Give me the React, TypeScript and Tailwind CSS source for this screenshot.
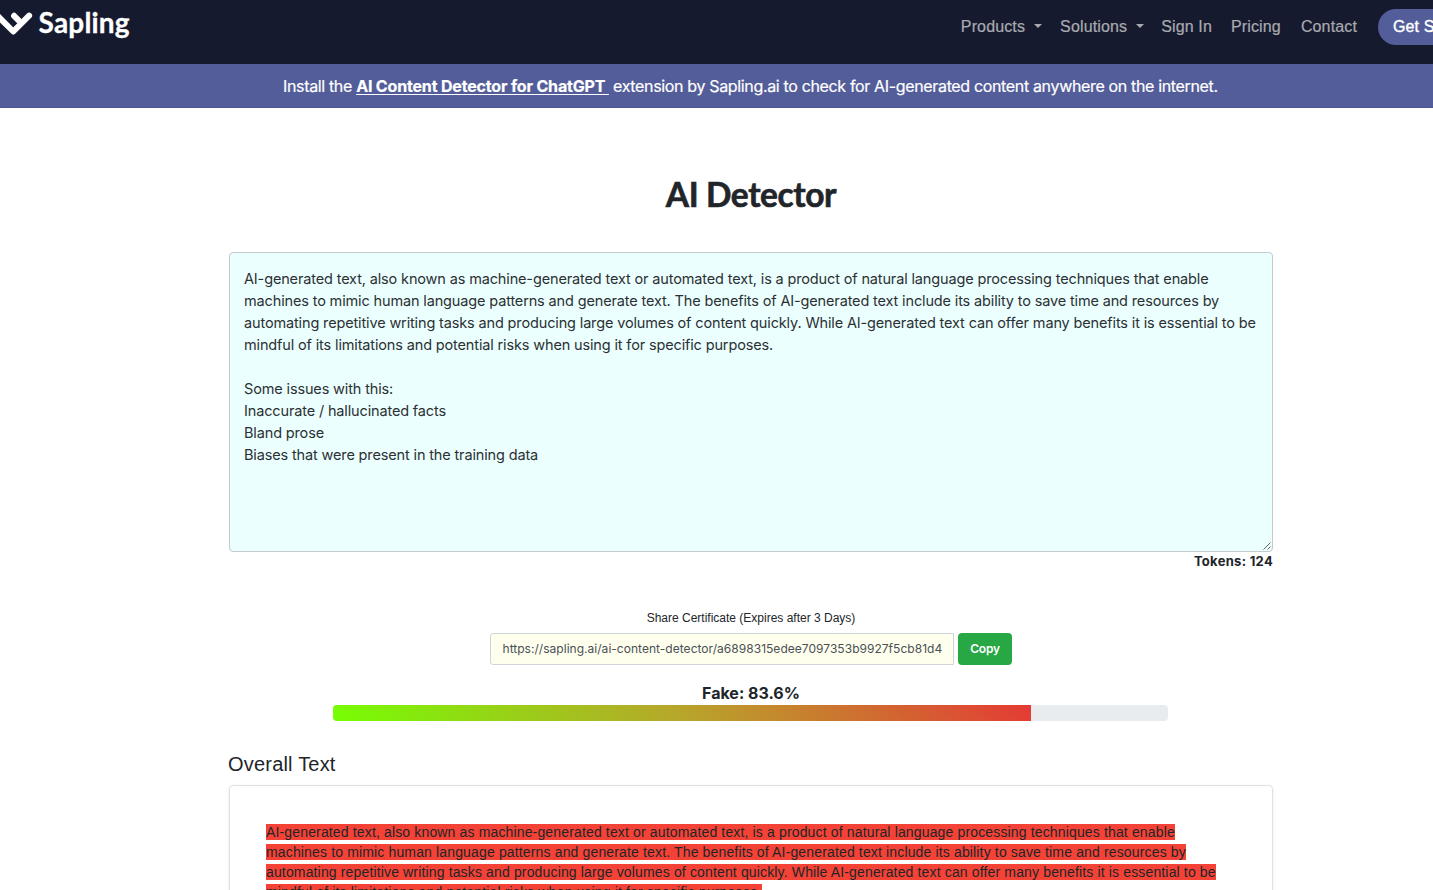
const bodyLines = [
  'AI-generated text, also known as machine-generated text or automated text, is a product of natural language processing techniques that enable',
  'machines to mimic human language patterns and generate text. The benefits of AI-generated text include its ability to save time and resources by',
  'automating repetitive writing tasks and producing large volumes of content quickly. While AI-generated text can offer many benefits it is essential to be',
  'mindful of its limitations and potential risks when using it for specific purposes.',
];

const issueLines = [
  'Some issues with this:',
  'Inaccurate / hallucinated facts',
  'Bland prose',
  'Biases that were present in the training data',
];

function Caret() {
  return <span className="-mt-[2px] ml-[9px] border-x-[4px] border-t-[4px] border-x-transparent border-t-[#a9aaaf]" />;
}

function Header() {
  return (
    <header className="flex h-16 items-start justify-between bg-[#161a2f]">
      <a className="flex items-start text-white">
        <svg className="w-9" width="36" height="40" viewBox="0 0 36 40" fill="none" stroke="white" strokeWidth="6" strokeLinecap="round" strokeLinejoin="round">
          <path d="M-3 15.2 L13.3 31.5 L29.1 15.7" />
          <path d="M14.1 15.8 L18.6 20.3" />
        </svg>
        <span className="mt-[6px] ml-[2.5px] font-['Lato'] text-[28px] leading-8 font-bold tracking-[0.2px] whitespace-nowrap [-webkit-text-stroke:0.3px_white]">Sapling</span>
      </a>
      <nav className="mr-[-57px] flex shrink-0 items-center pt-[9px] font-['Liberation_Sans',sans-serif] text-[16px] leading-9 tracking-[0.14px] whitespace-nowrap text-[#a9aaaf] [-webkit-text-stroke:0.2px_#a9aaaf]">
        <a className="flex items-center">Products<Caret /></a>
        <a className="ml-[18px] flex items-center">Solutions<Caret /></a>
        <a className="ml-[17px]">Sign In</a>
        <a className="ml-[19px]">Pricing</a>
        <a className="ml-5">Contact</a>
        <a className="ml-[21px] h-9 w-28 rounded-full bg-[#535d99] pl-[15px] text-white [-webkit-text-stroke:0.4px_white]">Get Started</a>
      </nav>
    </header>
  );
}

export default function App() {
  return (
    <div className="h-[890px] w-full overflow-hidden bg-white font-['Inter',sans-serif] text-[#212529]">
      <Header />
      <div className="flex h-11 items-center border-b border-[#4d568f] bg-[#535d99] pl-[283px] text-[16px] whitespace-pre text-white">
        <p className="tracking-[-0.345px] [-webkit-text-stroke:0.2px_white]">
          Install the <a className="font-bold tracking-[-0.17px] underline underline-offset-2">AI Content Detector for ChatGPT </a> extension by Sapling.ai to check for AI-generated content anywhere on the internet.
        </p>
      </div>
      <main className="ml-[229px] w-[1044px]">
        <h1 className="pt-[62px] text-center font-['Lato'] text-[33.5px] leading-[49px] font-bold tracking-[-0.4px] [-webkit-text-stroke:0.6px_#212529]">AI Detector</h1>
        <div className="relative mt-[33px] h-[300px] rounded-[4px] border border-[#c5c9cb] bg-[#ebffff] pt-[15px] pl-[14px] text-[14.5px] leading-[22px] tracking-[-0.144px] whitespace-nowrap text-[#2b3033]">
          {bodyLines.map((line) => (
            <p key={line}>{line}</p>
          ))}
          <div className="h-[22px]" />
          {issueLines.map((line) => (
            <p key={line}>{line}</p>
          ))}
          <svg className="absolute right-[1px] bottom-[1px]" width="8" height="8" viewBox="0 0 8 8" stroke="#555" strokeWidth="0.9">
            <path d="M0.5 7.5 L7.5 0.5 M4.5 7.5 L7.5 4.5" />
          </svg>
        </div>
        <p className="-mt-px text-right text-[13px] leading-5 font-bold tracking-[0.3px]">Tokens: 124</p>
        <p className="mt-[37px] text-center font-['Liberation_Sans',sans-serif] text-[12px] leading-5">Share Certificate (Expires after 3 Days)</p>
        <div className="mt-[5px] ml-[261px] flex h-8">
          <div className="w-[464px] overflow-hidden rounded-l-[3px] border border-[#ced4da] bg-[#ffffee] pl-[11.5px] text-[12px] leading-[30px] tracking-[0.03px] whitespace-nowrap text-[#495057]">
            https://sapling.ai/ai-content-detector/a6898315edee7097353b9927f5cb81d4
          </div>
          <button className="ml-1 w-[54px] rounded-[4px] bg-[#28a745] text-[12px] font-semibold tracking-[-0.2px] text-white">Copy</button>
        </div>
        <p className="mt-[17px] text-center text-[16px] leading-[23px] font-bold">Fake: 83.6%</p>
        <div className="ml-[104px] h-4 w-[835px] overflow-hidden rounded-[4px] bg-[#e9ecef]">
          <div className="h-full w-[698px] bg-[linear-gradient(45deg,#76ff03,#b8a52b_50%,#e53935)]" />
        </div>
        <h2 className="mt-[31px] -ml-px font-['Liberation_Sans',sans-serif] text-[20px] leading-6 tracking-[0.2px]">Overall Text</h2>
        <div className="mt-[9px] h-60 rounded-[4px] border border-[#dfe1e3] pt-[36px] pl-9 font-['Liberation_Sans',sans-serif] text-[14px] leading-5 tracking-[0.148px] whitespace-nowrap shadow-sm">
          {bodyLines.map((line) => (
            <p key={line}>
              <span className="bg-[#f44336]">{line}</span>
            </p>
          ))}
        </div>
      </main>
    </div>
  );
}
